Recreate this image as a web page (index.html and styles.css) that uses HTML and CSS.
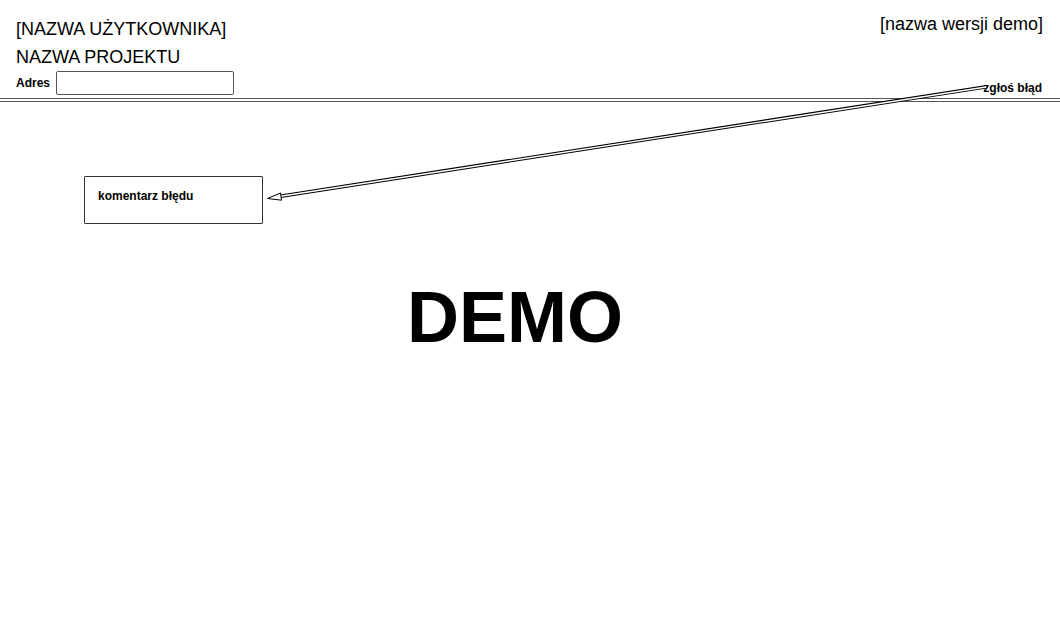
FILE: index.html
```html
<!DOCTYPE html>
<html>
<head>
    <title>Demo</title>
    <link rel="stylesheet" href="styles.css">
</head>
<body>
    <div class="header">
        <div class="header-left">
            <div class="user-name">[NAZWA UŻYTKOWNIKA]</div>
            <div class="project-name">NAZWA PROJEKTU</div>
            <div class="address-row">
                <label>Adres</label>
                <input type="text" class="address-input">
            </div>
        </div>
        <div class="header-right">
            <div class="version-name">[nazwa wersji demo]</div>
            <a class="report-link">zgłoś błąd</a>
        </div>
    </div>
    <div class="separator"></div>

    <div class="content">
        <div class="comment-box">komentarz błędu</div>
        <div class="demo-label">DEMO</div>
    </div>

    <!-- strzałka od "zgłoś błąd" do komentarza -->
    <svg class="arrow" width="1060" height="640" viewBox="0 0 1060 640">
        <line x1="985" y1="87" x2="279" y2="196.5" stroke="#000" stroke-width="3.6"/>
        <line x1="986" y1="87" x2="279" y2="196.5" stroke="#fff" stroke-width="1.4"/>
        <polygon points="267.5,198.5 281.5,200.2 280.5,193" fill="#fff" stroke="#000" stroke-width="1"/>
    </svg>
</body>
</html>
```

FILE: styles.css
```css
body {
    margin: 0;
    font-family: "Liberation Sans", Arial, sans-serif;
    color: #000;
    background: #fff;
    position: relative;
    width: 1060px;
    height: 640px;
    overflow: hidden;
}

.header {
    display: flex;
    justify-content: space-between;
    padding: 0 17px 0 16px;
    height: 98px;
}

.header-left {
    padding-top: 15px;
}

.user-name,
.project-name {
    font-size: 18px;
    line-height: 28px;
}

.address-row {
    display: flex;
    align-items: center;
    gap: 6px;
    margin-top: 0;
}

.address-row label {
    font-size: 12px;
    font-weight: bold;
}

.address-input {
    width: 178px;
    height: 24px;
    box-sizing: border-box;
    border: 1px solid #555;
    border-radius: 2px;
    margin: 0;
    padding: 0;
}

.header-right {
    display: flex;
    flex-direction: column;
    align-items: flex-end;
    padding-top: 12px;
}

.version-name {
    font-size: 18px;
    line-height: 24px;
}

.report-link {
    font-size: 12px;
    font-weight: bold;
    margin-top: 45px;
    margin-right: 1px;
}

.separator {
    height: 2px;
    border-top: 1px solid #555;
    border-bottom: 1px solid #555;
    background: #fff;
}

.content {
    padding: 74px 0 0 84px;
}

.comment-box {
    width: 179px;
    height: 48px;
    box-sizing: border-box;
    border: 1px solid #333;
    border-radius: 1px;
    padding: 12px 13px;
    font-size: 12px;
    font-weight: bold;
}

.demo-label {
    font-size: 72px;
    font-weight: bold;
    margin: 51px 0 0 323px;
    line-height: 84px;
}

.arrow {
    position: absolute;
    left: 0;
    top: 0;
    pointer-events: none;
}
```
